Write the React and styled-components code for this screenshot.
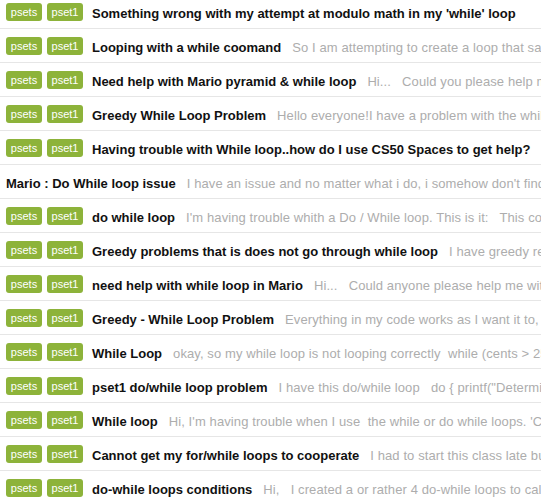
import React from "react";
import styled, { createGlobalStyle } from "styled-components";

const Global = createGlobalStyle`
  html, body { margin: 0; padding: 0; background: #fff; }
  body { font-family: "Liberation Sans", Arial, Helvetica, sans-serif; overflow: hidden; }
`;

const List = styled.ul`
  list-style: none;
  margin: -5px 0 0 0;
  padding: 0;
  width: 541px;
  overflow: hidden;
`;

const Row = styled.li`
  display: flex;
  align-items: center;
  height: 33px;
  border-bottom: 1px solid #e6e6e6;
  padding-left: 6px;
  white-space: pre;
  overflow: hidden;
`;

const Tags = styled.span`
  display: flex;
  gap: 5px;
  margin-right: 9px;
  flex: none;
`;

const Tag = styled.span`
  display: inline-flex;
  align-items: center;
  justify-content: center;
  width: 36px;
  height: 18px;
  border-radius: 3px;
  background: #8db33a;
  color: #fff;
  font-size: 11px;
  line-height: 18px;
`;

const Title = styled.span`
  font-weight: bold;
  font-size: 13px;
  color: #111;
  flex: none;
  margin-top: 3px;
`;

const Excerpt = styled.span`
  font-size: 13px;
  color: #adadad;
  margin-left: 11px;
  margin-top: 3px;
  letter-spacing: 0.1px;
  flex: none;
`;

const posts = [
  { tags: true, title: "Something wrong with my attempt at modulo math in my 'while' loop", ex: "" },
  { tags: true, title: "Looping with a while coomand", ex: "So I am attempting to create a loop that says when" },
  { tags: true, title: "Need help with Mario pyramid & while loop", ex: "Hi...   Could you please help me" },
  { tags: true, title: "Greedy While Loop Problem", ex: "Hello everyone!I have a problem with the while loop" },
  { tags: true, title: "Having trouble with While loop..how do I use CS50 Spaces to get help?", ex: "" },
  { tags: false, title: "Mario : Do While loop issue", ex: "I have an issue and no matter what i do, i somehow don't find" },
  { tags: true, title: "do while loop", ex: "I'm having trouble whith a Do / While loop. This is it:   This code" },
  { tags: true, title: "Greedy problems that is does not go through while loop", ex: "I have greedy really" },
  { tags: true, title: "need help with while loop in Mario", ex: "Hi...   Could anyone please help me with" },
  { tags: true, title: "Greedy - While Loop Problem", ex: "Everything in my code works as I want it to, but" },
  { tags: true, title: "While Loop", ex: "okay, so my while loop is not looping correctly  while (cents > 25)" },
  { tags: true, title: "pset1 do/while loop problem", ex: "I have this do/while loop   do { printf(\"Determine" },
  { tags: true, title: "While loop", ex: "Hi, I'm having trouble when I use  the while or do while loops. 'Cause" },
  { tags: true, title: "Cannot get my for/while loops to cooperate", ex: "I had to start this class late but" },
  { tags: true, title: "do-while loops conditions", ex: "Hi,   I created a or rather 4 do-while loops to calculate" },
];

export default function App() {
  return (
    <>
      <Global />
      <List>
        {posts.map((p, i) => (
          <Row key={i}>
            {p.tags && (
              <Tags>
                <Tag>psets</Tag>
                <Tag>pset1</Tag>
              </Tags>
            )}
            <Title>{p.title}</Title>
            {p.ex && <Excerpt>{p.ex}</Excerpt>}
          </Row>
        ))}
      </List>
    </>
  );
}
